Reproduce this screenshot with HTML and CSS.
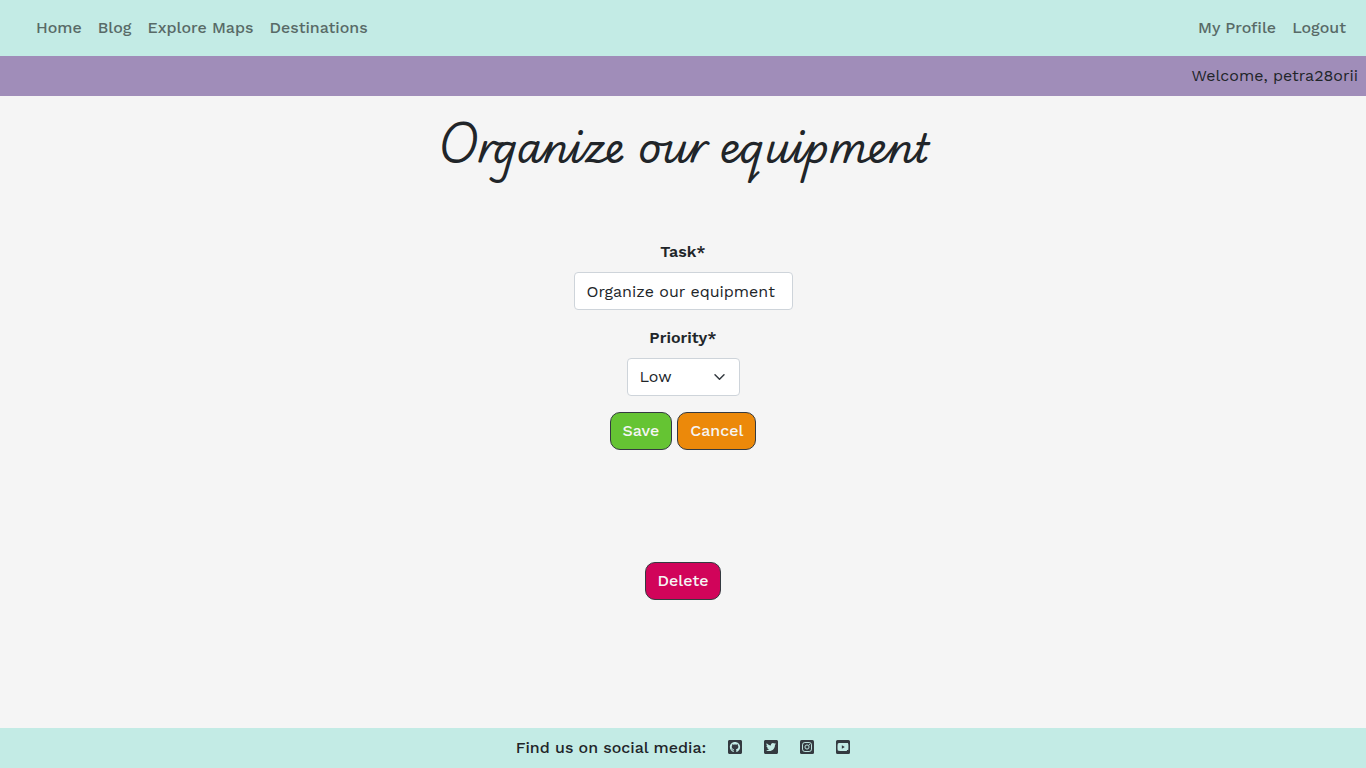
FILE: index.html
```html
<!DOCTYPE html>
<html lang="en">
<head>
<meta charset="utf-8">
<meta name="viewport" content="width=device-width, initial-scale=1">
<title>Organize our equipment</title>
<link rel="stylesheet" href="styles.css">
</head>
<body>
<header>
  <nav class="navbar" aria-label="Main">
    <div class="nav-group">
      <a href="#">Home</a>
      <a href="#">Blog</a>
      <a href="#">Explore Maps</a>
      <a href="#">Destinations</a>
    </div>
    <div class="nav-group">
      <a href="#">My Profile</a>
      <a href="#">Logout</a>
    </div>
  </nav>
  <div class="welcome">Welcome, petra28orii</div>
</header>
<main>
  <h1 class="title">Organize our equipment</h1>
  <form class="task-form">
    <label for="task">Task*</label>
    <input class="control task" id="task" type="text" value="Organize our equipment">
    <label for="priority">Priority*</label>
    <div class="select-wrap">
      <select class="control priority" id="priority">
        <option>Low</option>
        <option>Medium</option>
        <option>High</option>
      </select>
      <svg class="chevron" viewBox="0 0 16 16" aria-hidden="true"><path d="m2 5 6 6 6-6"/></svg>
    </div>
    <div class="actions">
      <button class="btn save" type="submit">Save</button>
      <button class="btn cancel" type="button">Cancel</button>
    </div>
    <button class="btn delete" type="button">Delete</button>
  </form>
</main>
<footer class="footer">
  <span class="social-label">Find us on social media:</span>
  <div class="social">
    <a href="#" aria-label="GitHub"><svg viewBox="0 0 448 512"><path d="M400 32H48C21.5 32 0 53.5 0 80v352c0 26.5 21.5 48 48 48h352c26.5 0 48-21.5 48-48V80c0-26.5-21.5-48-48-48zM277.3 415.7c-8.4 1.5-11.5-3.7-11.5-8 0-5.4.2-33 .2-55.3 0-15.6-5.2-25.5-11.3-30.7 37-4.1 76-9.2 76-73.1 0-18.2-6.5-27.3-17.1-39 1.7-4.3 7.4-22-1.7-45-13.9-4.3-45.7 17.9-45.7 17.9-13.2-3.7-27.5-5.6-41.6-5.6-14.1 0-28.4 1.9-41.6 5.6 0 0-31.8-22.2-45.7-17.9-9.1 22.9-3.5 40.6-1.7 45-10.6 11.7-15.6 20.8-15.6 39 0 63.6 37.3 69 74.3 73.1-4.8 4.3-9.1 11.7-10.6 22.3-9.5 4.3-33.8 11.7-48.3-13.9-9.1-15.8-25.5-17.1-25.5-17.1-16.2-.2-1.1 10.2-1.1 10.2 10.8 5 18.4 24.2 18.4 24.2 9.7 29.7 56.1 19.7 56.1 19.7 0 13.9.2 36.5.2 40.6 0 4.3-3 9.5-11.5 8-66-22.1-112.2-84.9-112.2-158.3 0-91.8 70.2-161.5 162-161.5S388 165.6 388 257.4c.1 73.4-44.7 136.3-110.7 158.3z"/></svg></a>
    <a href="#" aria-label="Twitter"><svg viewBox="0 0 448 512"><path d="M400 32H48C21.5 32 0 53.5 0 80v352c0 26.5 21.5 48 48 48h352c26.5 0 48-21.5 48-48V80c0-26.5-21.5-48-48-48zm-48.9 158.8c.2 2.8.2 5.7.2 8.5 0 86.7-66 186.6-186.6 186.6-37.2 0-71.7-10.8-100.7-29.4 5.3.6 10.4.8 15.8.8 30.7 0 58.9-10.4 81.4-28-28.8-.6-53-19.5-61.3-45.5 10.1 1.5 19.2 1.5 29.6-1.2-30-6.1-52.5-32.5-52.5-64.4v-.8c8.7 4.9 18.9 7.9 29.6 8.3a65.4 65.4 0 0 1-29.2-54.6c0-12.2 3.2-23.4 8.9-33.1 32.3 39.8 80.8 65.8 135.2 68.6-9.3-44.5 24-80.6 64-80.6 18.9 0 35.9 7.9 47.9 20.7 14.8-2.8 29-8.3 41.6-15.8-4.9 15.2-15.2 28-28.8 36.1 13.2-1.4 26-5.1 37.8-10.2-8.9 13.1-20.1 24.7-32.9 34z"/></svg></a>
    <a href="#" aria-label="Instagram"><svg viewBox="0 0 448 512"><rect y="32" width="448" height="448" rx="48"/><g class="cut"><rect x="80" y="112" width="288" height="288" rx="76"/><circle cx="224" cy="256" r="66"/></g><circle class="dot" cx="301" cy="179" r="18"/></svg></a>
    <a href="#" aria-label="YouTube"><svg viewBox="0 0 448 512"><path fill-rule="evenodd" d="M48 32h352a48 48 0 0 1 48 48v352a48 48 0 0 1-48 48H48a48 48 0 0 1-48-48V80a48 48 0 0 1 48-48zM224 128c-132 0-152 4-162 14-17 18-17 210 0 228 10 10 30 14 162 14s152-4 162-14c17-18 17-210 0-228-10-10-30-14-162-14zM187 202l95 54-95 54z"/></svg></a>
  </div>
</footer>
</body>
</html>
```
FILE: styles.css
```css
* { box-sizing: border-box; }

body {
  display: flex;
  flex-direction: column;
  min-height: 100vh;
  margin: 0;
  background: #f5f5f5;
  color: #212529;
  font: 400 16px/24px "Work Sans", Inter, "Liberation Sans", sans-serif;
}

.navbar {
  display: flex;
  flex-wrap: wrap;
  justify-content: space-between;
  padding: 8px 12px 8px 28px;
  background: #c3ebe5;
}

.nav-group { display: flex; flex-wrap: wrap; }

.nav-group a {
  padding: 8px;
  color: #586a67;
  font-weight: 500;
  text-decoration: none;
}

.welcome {
  padding: 8px;
  background: #a08db9;
  text-align: right;
}

main { flex: 1; padding: 24px 12px; text-align: center; }

.title {
  margin: 0 0 72px;
  font: 400 40px/48px "Playwrite AU SA", "Edu VIC WA NT Beginner", Lato, cursive;
}

.task-form {
  display: flex;
  flex-direction: column;
  align-items: center;
}

.task-form label { margin-bottom: 8px; font-weight: 600; }

.control {
  height: 38px;
  margin: 0 0 16px;
  padding: 6px 12px;
  border: 1px solid #ced4da;
  border-radius: 4px;
  background: #fff;
  color: #212529;
  font: inherit;
}

.task { width: 219px; }

.select-wrap { position: relative; }

.priority { display: block; width: 113px; appearance: none; }

.chevron {
  position: absolute;
  top: 13px;
  right: 14px;
  width: 13px;
  height: 12px;
  fill: none;
  stroke: #343a40;
  stroke-width: 2;
  stroke-linecap: round;
  stroke-linejoin: round;
  pointer-events: none;
}

.actions { display: flex; gap: 5px; margin-bottom: 112px; }

.btn {
  height: 38px;
  padding: 6px 12px;
  border: 1px solid #343a40;
  border-radius: 10px;
  color: #f5f5f5;
  font: inherit;
  font-weight: 500;
}

.save { background: #65c433; }
.cancel { background: #ec890a; }
.delete { background: #d1045a; }

.footer {
  display: flex;
  justify-content: center;
  align-items: center;
  gap: 22px;
  min-height: 40px;
  padding: 8px;
  background: #c3ebe5;
}

.social-label { font-weight: 500; }

.social { display: flex; gap: 22px; padding-bottom: 2px; }

.social a { display: flex; color: #343a40; }

.social svg { width: 14px; height: 16px; fill: currentColor; }

.social .cut { fill: none; stroke: #c3ebe5; stroke-width: 30; }

.social .dot { fill: #c3ebe5; }
```
